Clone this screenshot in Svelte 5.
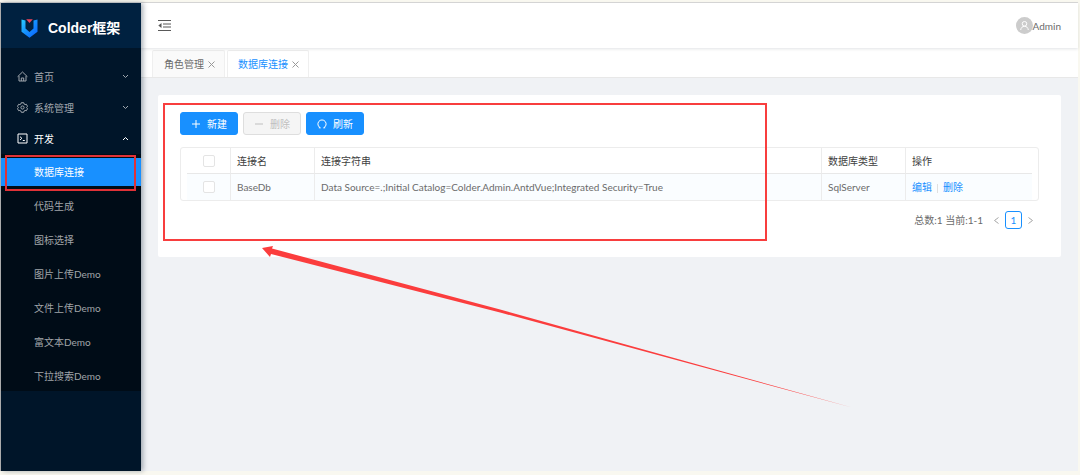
<script lang="ts">
  const menus = [
    { title: "首页", icon: "home" },
    { title: "系统管理", icon: "setting" },
    {
      title: "开发",
      icon: "code",
      children: [
        "数据库连接",
        "代码生成",
        "图标选择",
        "图片上传Demo",
        "文件上传Demo",
        "富文本Demo",
        "下拉搜索Demo",
      ],
    },
  ];
  const tabs = ["角色管理", "数据库连接"];
  const rows = [
    {
      name: "BaseDb",
      conn: "Data Source=.;Initial Catalog=Colder.Admin.AntdVue;Integrated Security=True",
      type: "SqlServer",
    },
  ];

  let current = $state("数据库连接");
  let openMenu = $state("开发");
  let selected: string[] = $state([]);

  function toggleMenu(title: string) {
    openMenu = openMenu === title ? "" : title;
  }

  function toggleAll() {
    selected = selected.length === rows.length ? [] : rows.map((r) => r.name);
  }
</script>

<div class="layout">
  <aside>
    <a class="logo" href="#home">
      <svg width="17" height="20" viewBox="0 0 17 20">
        <defs>
          <linearGradient id="logo-blue" x1="0" y1="0" x2="1" y2="1">
            <stop offset="0" stop-color="#29cdff" />
            <stop offset="0.5" stop-color="#148eff" />
            <stop offset="1" stop-color="#0a60ff" />
          </linearGradient>
        </defs>
        <path
          d="M.5 1.500 4.500 2.500v8l4 3.500 4-3.500v-8l4-1v12.300l-8 6-8-6z"
          fill="url(#logo-blue)"
        />
        <path d="M5.200 1.200h6.600L8.500 5z" fill="#f0455a" />
      </svg>
      <h1>Colder框架</h1>
    </a>
    <nav>
      {#each menus as menu}
        <button
          class="menu"
          class:open={openMenu === menu.title}
          onclick={() => toggleMenu(menu.title)}
        >
          <svg class="icon" width="11" height="11" viewBox="0 0 11 11">
            {#if menu.icon === "home"}
              <path d="M.6 5.700 5.500 1l4.900 4.700M2 5v5h7V5M4.300 10V7h2.400v3" />
            {:else if menu.icon === "setting"}
              <path
                d="M4.300.7h2.400l.4 1.300 1 .6 1.300-.3 1.100 2-.9 1.200.9 1.200-1.100 2-1.300-.3-1 .6-.4 1.300H4.300L3.900 9l-1-.6-1.300.3-1.100-2 .9-1.200-.9-1.200 1.100-2 1.300.3 1-.6z"
              />
              <circle cx="5.500" cy="5.500" r="1.600" />
            {:else}
              <path d="M1 1h9v9H1zM3 3.700l1.900 1.600L3 7M5.800 7.500h2" />
            {/if}
          </svg>
          <span>{menu.title}</span>
          <svg class="arrow" width="7" height="5" viewBox="0 0 7 5">
            <path
              d={openMenu === menu.title ? "M1 4l2.500-2.500L6 4" : "M1 1l2.500 2.500L6 1"}
            />
          </svg>
        </button>
        {#if menu.children && openMenu === menu.title}
          <ul>
            {#each menu.children as child}
              <li>
                <a
                  href="#{child}"
                  class:active={current === child}
                  onclick={() => (current = child)}>{child}</a
                >
              </li>
            {/each}
          </ul>
        {/if}
      {/each}
    </nav>
    <div class="mark menu-mark"></div>
  </aside>

  <div class="body">
    <header>
      <button class="fold" aria-label="收起菜单">
        <svg width="13" height="12" viewBox="0 0 13 12">
          <path
            d="M0 .5h13M5 4h8M5 7h8M0 10.500h13"
            fill="none"
            stroke="#595959"
          />
          <path d="M.3 5.500 3.500 3v5z" fill="#595959" />
        </svg>
      </button>
      <button class="user">
        <svg width="17" height="17" viewBox="0 0 17 17">
          <circle cx="8.500" cy="8.500" r="8.500" fill="#ccc" />
          <g fill="none" stroke="#fff" stroke-width="1">
            <circle cx="8.500" cy="6.800" r="2.300" />
            <path d="M4.700 13c.2-2.300 1.700-3.700 3.800-3.700s3.600 1.400 3.800 3.700" />
          </g>
        </svg>
        <span>Admin</span>
      </button>
    </header>

    <div class="tabs">
      {#each tabs as tab}
        <div class="tab" class:active={current === tab}>
          <button onclick={() => (current = tab)}>{tab}</button>
          <button class="close" aria-label="关闭{tab}">
            <svg width="7" height="7" viewBox="0 0 7 7">
              <path d="M.5.5l6 6M6.500.5l-6 6" />
            </svg>
          </button>
        </div>
      {/each}
    </div>

    <main>
      <section>
        <div class="toolbar">
          <button class="btn">
            <svg width="10" height="10" viewBox="0 0 10 10">
              <path d="M5 1v8M1 5h8" />
            </svg>
            新建
          </button>
          <button class="btn" disabled={selected.length === 0}>
            <svg width="10" height="10" viewBox="0 0 10 10">
              <path d="M1 5h8" />
            </svg>
            删除
          </button>
          <button class="btn">
            <svg width="10" height="10" viewBox="0 0 10 10">
              <path d="M3.400 8.800H1.800M3.400 8.800a4.100 4.100 0 1 1 3.200 0M6.600 8.800h1.600" />
            </svg>
            刷新
          </button>
        </div>

        <div class="table">
          <table>
            <colgroup>
              <col class="col-check" />
              <col class="col-name" />
              <col />
              <col class="col-type" />
              <col class="col-action" />
            </colgroup>
            <thead>
              <tr>
                <th>
                  <input
                    type="checkbox"
                    aria-label="全选"
                    checked={selected.length === rows.length}
                    onchange={toggleAll}
                  />
                </th>
                <th>连接名</th>
                <th>连接字符串</th>
                <th>数据库类型</th>
                <th>操作</th>
              </tr>
            </thead>
            <tbody>
              {#each rows as row}
                <tr>
                  <td>
                    <input
                      type="checkbox"
                      aria-label={row.name}
                      value={row.name}
                      bind:group={selected}
                    />
                  </td>
                  <td>{row.name}</td>
                  <td>{row.conn}</td>
                  <td>{row.type}</td>
                  <td class="actions">
                    <a href="#edit">编辑</a><i></i><a href="#delete">删除</a>
                  </td>
                </tr>
              {/each}
            </tbody>
          </table>
        </div>

        <div class="pagination">
          <span>总数:1 当前:1-1</span>
          <button aria-label="上一页">
            <svg width="5" height="7" viewBox="0 0 5 7">
              <path d="M4.500.5l-4 3 4 3" />
            </svg>
          </button>
          <button class="page">1</button>
          <button aria-label="下一页">
            <svg width="5" height="7" viewBox="0 0 5 7">
              <path d="M.5.5l4 3-4 3" />
            </svg>
          </button>
        </div>
        <div class="mark table-mark"></div>
        <svg class="pointer" width="590" height="162" viewBox="0 0 590 162">
          <path d="M0 2 11 0l-1 2.500L240 64l350 97.500L240 67 9 8l-1 3z" fill="#fb3d3d" />
        </svg>
      </section>
    </main>
  </div>
</div>

<style>
  :global(body) {
    margin: 0;
    background: #f9f8f0;
  }
  :global(#app) {
    box-sizing: border-box;
    height: 100vh;
    padding: 2px 2px 4px 0;
  }
  .layout {
    box-sizing: border-box;
    display: flex;
    height: 100%;
    border-top: 1px solid #d9d9d9;
    border-left: 1px solid #b5b5b5;
    background: #f0f2f5;
    color: #6b6b6b;
    font-family: Lato, "Noto Sans CJK SC", sans-serif;
    font-size: 10px;
    line-height: 16px;
  }
  button {
    padding: 0;
    border: 0;
    background: none;
    color: inherit;
    font: inherit;
    cursor: pointer;
  }
  a {
    color: #1890ff;
    text-decoration: none;
  }
  svg {
    flex: none;
  }

  aside {
    position: relative;
    z-index: 1;
    flex: none;
    width: 140px;
    background: #001529;
    box-shadow: 2px 0 5px rgba(0, 21, 41, 0.35);
  }
  .logo {
    box-sizing: border-box;
    display: flex;
    align-items: center;
    gap: 10px;
    height: 45px;
    padding: 4px 0 0 20px;
    background: #002140;
    color: #fff;
  }
  .logo h1 {
    margin: 0;
    font-family: "Liberation Sans", "Noto Sans CJK SC", sans-serif;
    font-size: 14px;
    line-height: 20px;
  }
  nav {
    padding-top: 13px;
  }
  .menu {
    display: flex;
    align-items: center;
    gap: 6px;
    width: 100%;
    height: 31px;
    padding: 0 12px 0 16px;
    color: #a0a7ae;
    text-align: left;
  }
  .menu.open {
    color: #fff;
  }
  .menu span {
    flex: 1;
  }
  .menu svg {
    fill: none;
    stroke: currentColor;
  }
  ul {
    display: flex;
    flex-direction: column;
    gap: 6px;
    margin: 0;
    padding: 4px 0 1px;
    background: #000c17;
    list-style: none;
  }
  li a {
    display: block;
    padding-left: 33px;
    color: #a0a5a9;
    line-height: 28px;
  }
  li a.active {
    background: #1890ff;
    color: #fff;
  }

  .body {
    flex: 1;
    min-width: 0;
  }
  header {
    display: flex;
    align-items: center;
    justify-content: space-between;
    height: 45px;
    padding: 0 17px;
    background: #fff;
    box-shadow: 0 1px 3px rgba(0, 21, 41, 0.12);
    position: relative;
  }
  .fold,
  .user {
    display: flex;
    align-items: center;
  }
  .tabs {
    display: flex;
    gap: 2px;
    padding: 2px 11px 0;
    border-bottom: 1px solid #e8e8e8;
    background: #fff;
  }
  .tab {
    display: flex;
    align-items: center;
    gap: 4px;
    height: 26px;
    padding: 0 9px 0 11px;
    border: 1px solid #efefef;
    border-bottom: 0;
    border-radius: 2px 2px 0 0;
    background: #fafafa;
  }
  .tab.active {
    padding-left: 10px;
    background: #fff;
    color: #1890ff;
  }
  .close {
    display: flex;
    color: #999;
  }
  .close path,
  .pagination path {
    fill: none;
    stroke: currentColor;
  }

  main {
    padding: 17px;
  }
  section {
    position: relative;
    padding: 17px 22px 28px;
    border-radius: 2px;
    background: #fff;
  }
  .toolbar {
    display: flex;
    gap: 5px;
    margin-bottom: 12px;
  }
  .btn {
    display: flex;
    align-items: center;
    justify-content: center;
    gap: 6px;
    width: 58px;
    height: 23px;
    border: 1px solid #1890ff;
    border-radius: 3px;
    background: #1890ff;
    color: #fff;
  }
  .btn:disabled {
    border-color: #dedede;
    background: #f5f5f5;
    color: #bfbfbf;
  }
  .btn path {
    fill: none;
    stroke: currentColor;
  }

  .table {
    padding: 0 6px;
    border: 1px solid #ececec;
    border-radius: 3px;
  }
  table {
    width: 100%;
    border-collapse: separate;
    border-spacing: 0;
    table-layout: fixed;
  }
  .col-check {
    width: 44px;
  }
  .col-name,
  .col-type {
    width: 84px;
  }
  .col-action {
    width: 126px;
  }
  th,
  td {
    box-sizing: border-box;
    height: 26px;
    padding: 0 6px;
    border-right: 1px solid #ececec;
    text-align: left;
    font-weight: normal;
  }
  th {
    border-bottom: 1px solid #e8e8e8;
    color: #404040;
  }
  td {
    background: #fafdff;
  }
  th:first-child,
  td:first-child {
    text-align: center;
  }
  th:last-child,
  td:last-child {
    border-right: 0;
  }
  input {
    appearance: none;
    display: block;
    width: 12px;
    height: 12px;
    margin: 0 auto;
    border: 1px solid #e4e4e4;
    border-radius: 2px;
    background: #fff;
  }
  input:checked {
    border-color: #1890ff;
    background: #1890ff;
  }
  .actions i {
    display: inline-block;
    width: 1px;
    height: 9px;
    margin: 0 5px;
    background: #e0e0e0;
    vertical-align: middle;
  }

  .pagination {
    display: flex;
    align-items: center;
    justify-content: flex-end;
    gap: 6px;
    margin-top: 10px;
    padding-right: 6px;
  }
  .pagination span {
    margin-right: 5px;
  }
  .pagination button {
    display: flex;
    align-items: center;
    justify-content: center;
    color: #a6a6a6;
  }
  .pagination .page {
    width: 17px;
    height: 18px;
    border: 1px solid #1890ff;
    border-radius: 3px;
    color: #1890ff;
  }

  /* callouts */
  .mark {
    position: absolute;
    border: 2px solid #f83e3e;
    pointer-events: none;
  }
  .menu-mark {
    top: 152px;
    left: 4px;
    width: 127px;
    height: 32px;
    border-color: #e03237;
  }
  .table-mark {
    top: 8px;
    left: 5px;
    width: 600px;
    height: 134px;
  }
  .pointer {
    position: absolute;
    top: 151px;
    left: 104px;
    pointer-events: none;
  }
</style>
